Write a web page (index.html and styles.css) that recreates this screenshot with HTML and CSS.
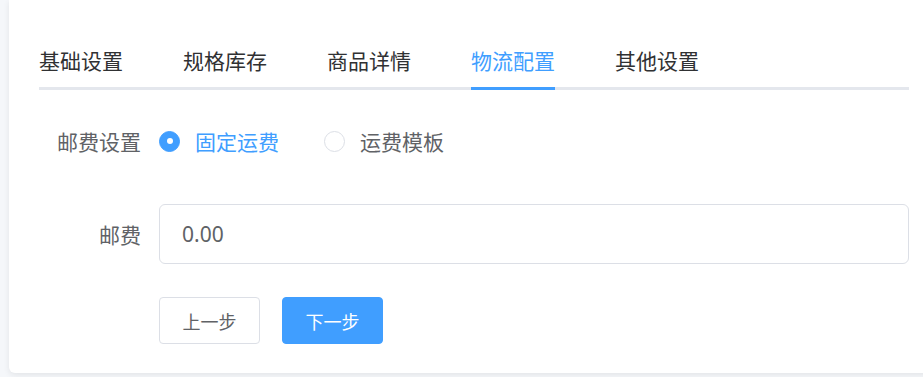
FILE: index.html
```html
<!DOCTYPE html>
<html lang="zh-CN">
<head>
  <meta charset="UTF-8">
  <meta name="viewport" content="width=device-width, initial-scale=1.0">
  <title>物流配置</title>
  <link rel="stylesheet" href="styles.css">
</head>
<body>
  <div class="card">
    <div class="tabs">
      <div class="tab">基础设置</div>
      <div class="tab">规格库存</div>
      <div class="tab">商品详情</div>
      <div class="tab active">物流配置</div>
      <div class="tab">其他设置</div>
    </div>

    <div class="form">
      <div class="form-item">
        <label class="form-label">邮费设置</label>
        <div class="form-content">
          <label class="radio checked">
            <span class="radio-dot"></span>
            <span class="radio-text">固定运费</span>
          </label>
          <label class="radio">
            <span class="radio-dot"></span>
            <span class="radio-text">运费模板</span>
          </label>
        </div>
      </div>

      <div class="form-item">
        <label class="form-label">邮费</label>
        <div class="form-content">
          <input class="input" type="text" value="0.00">
        </div>
      </div>

      <div class="form-item form-btns">
        <div class="form-label"></div>
        <div class="form-content">
          <button class="btn">上一步</button>
          <button class="btn btn-primary">下一步</button>
        </div>
      </div>
    </div>
  </div>
</body>
</html>
```

FILE: styles.css
```css
* {
  padding: 0;
  margin: 0;
  box-sizing: border-box;
}
body {
  height: 377px;
  overflow: hidden;
  background-color: #f5f7fa;
  font-family: "Noto Sans CJK SC", "Noto Sans", sans-serif;
  color: #606266;
}
.card {
  width: 930px;
  margin-left: 9px;
  padding: 30px 30px 29px;
  background-color: #fff;
  border-radius: 0 0 6px 6px;
  box-shadow: 0 2px 6px rgba(0, 0, 0, 0.08);
}

/* tabs */
.tabs {
  display: flex;
  height: 60px;
  box-shadow: inset 0 -3px 0 #e4e7ed;
}
.tab {
  position: relative;
  padding: 0 30px;
  line-height: 60px;
  font-size: 21px;
  color: #303133;
}
.tab:first-child {
  padding-left: 0;
}
.tab:last-child {
  padding-right: 0;
}
.tab.active {
  color: #409eff;
}
.tab.active::after {
  content: "";
  position: absolute;
  left: 30px;
  right: 30px;
  bottom: 0;
  height: 3px;
  background-color: #409eff;
}

/* form */
.form {
  margin-top: 21px;
}
.form-item {
  display: flex;
  min-height: 60px;
  margin-bottom: 33px;
}
.form-label {
  width: 120px;
  flex-shrink: 0;
  padding-right: 18px;
  text-align: right;
  line-height: 60px;
  font-size: 21px;
  color: #606266;
}
.form-content {
  flex: 1;
  display: flex;
  align-items: center;
}
.radio {
  display: inline-flex;
  align-items: center;
  margin-right: 45px;
  font-size: 21px;
  color: #606266;
}
.radio-dot {
  width: 21px;
  height: 21px;
  border: 1.5px solid #dcdfe6;
  border-radius: 50%;
  display: flex;
  align-items: center;
  justify-content: center;
}
.radio-text {
  padding-left: 15px;
}
.radio.checked {
  color: #409eff;
}
.radio.checked .radio-dot {
  background-color: #409eff;
  border-color: #409eff;
}
.radio.checked .radio-dot::after {
  content: "";
  width: 6px;
  height: 6px;
  border-radius: 50%;
  background-color: #fff;
}
.input {
  width: 100%;
  height: 60px;
  padding: 0 22px;
  border: 1px solid #dcdfe6;
  border-radius: 6px;
  outline: none;
  font-family: "Noto Sans", sans-serif;
  font-size: 21px;
  color: #606266;
}

/* buttons */
.form-btns {
  min-height: 0;
  margin-bottom: 0;
}
.form-btns .form-content {
  align-items: flex-start;
  gap: 22px;
}
.btn {
  width: 101px;
  height: 47px;
  border: 1px solid #dcdfe6;
  border-radius: 4px;
  background-color: #fff;
  font-family: "Noto Sans CJK SC", sans-serif;
  font-size: 18px;
  line-height: 1;
  color: #606266;
}
.btn-primary {
  background-color: #409eff;
  border-color: #409eff;
  color: #fff;
}
```
